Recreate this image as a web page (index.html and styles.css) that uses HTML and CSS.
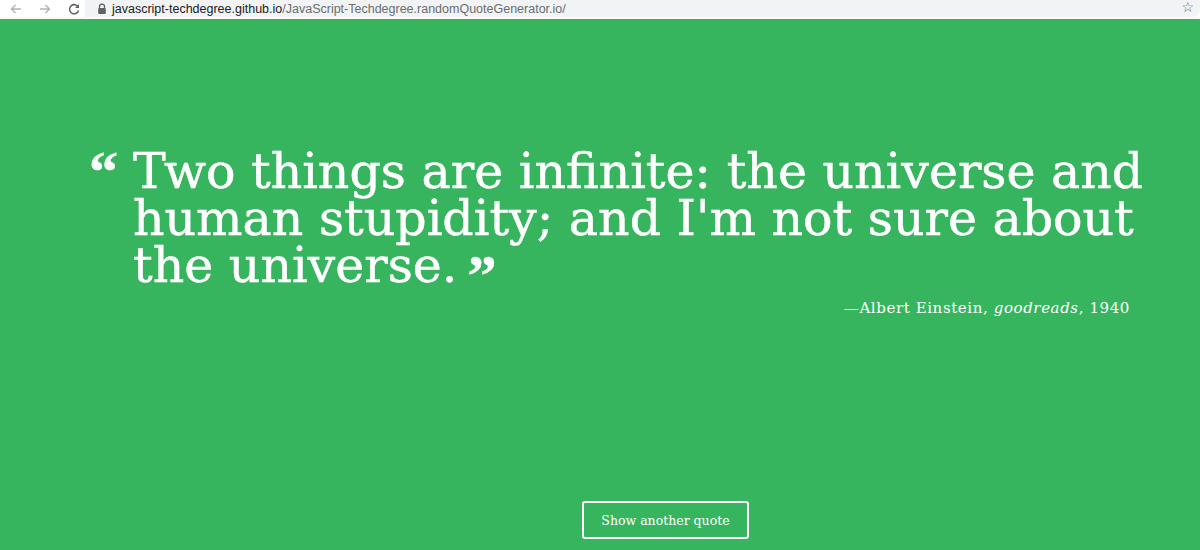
FILE: index.html
```html
<!DOCTYPE html>
<html>
<head>
<meta charset="utf-8">
<link rel="stylesheet" href="styles.css">
</head>
<body>
<div class="chrome">
  <div class="nav">
    <svg class="ico" width="14" height="14" viewBox="0 0 14 14"><path d="M12 7H2.5M6.5 3L2.5 7l4 4" fill="none" stroke="#b0b3b8" stroke-width="1.4"/></svg>
    <svg class="ico" width="14" height="14" viewBox="0 0 14 14"><path d="M2 7h9.5M7.5 3l4 4-4 4" fill="none" stroke="#b0b3b8" stroke-width="1.4"/></svg>
    <svg class="ico" width="14" height="14" viewBox="0 0 14 14"><path d="M11.3 5.2A4.6 4.6 0 1 0 11.6 8.5" fill="none" stroke="#5f6368" stroke-width="1.5"/><path d="M12 2v4H8z" fill="#5f6368"/></svg>
  </div>
  <div class="omnibox">
    <svg class="lock" width="10" height="12" viewBox="0 0 10 12"><path d="M2.5 5V3.6a2.5 2.5 0 0 1 5 0V5" fill="none" stroke="#5f6368" stroke-width="1.3"/><rect x="1.2" y="5" width="7.6" height="6" rx="1" fill="#5f6368"/></svg>
    <span class="host">javascript-techdegree.github.io</span><span class="path">/JavaScript-Techdegree.randomQuoteGenerator.io/</span>
    <span class="star">☆</span>
  </div>
</div>
<main class="page">
  <div class="quote-box">
    <p class="quote">Two things are infinite: the universe and human stupidity; and I'm not sure about the universe.</p>
    <p class="source">—Albert Einstein<span class="citation">goodreads</span><span class="year">1940</span></p>
  </div>
  <button class="load-quote">Show another quote</button>
</main>
</body>
</html>
```
FILE: styles.css
```css
html, body { margin: 0; padding: 0; }
body { background: #37b55e; font-family: "DejaVu Serif", serif; overflow: hidden; height: 550px; }
.chrome { height: 17px; background: #fff; display: flex; align-items: center; border-bottom: 2px solid #fafafa; }
.nav { display: flex; gap: 15px; padding-left: 9px; width: 76px; align-items: center; }
.ico { display: block; }
.omnibox { flex: 1; height: 17px; background: #f1f3f4; border-radius: 0 0 8px 0; display: flex; align-items: center; padding-left: 12px; font-family: "Liberation Sans", Arial, sans-serif; font-size: 12.5px; position: relative; }
.lock { margin-right: 5px; }
.host { color: #202124; }
.path { color: #6a6e72; }
.star { position: absolute; right: 6px; top: -1px; font-size: 14px; color: #5f6368; font-family: "DejaVu Sans", sans-serif; }
.page { height: 531px; display: flex; flex-direction: column; align-items: flex-start; padding-left: 133px; color: #fff; box-sizing: border-box; }
.quote-box { width: 1022px; padding-top: 129px; }
.quote { margin: 0; font-size: 49px; line-height: 47px; position: relative; -webkit-text-stroke: 0.5px #fff; }
.quote::before { content: "\201C"; position: absolute; left: -44px; top: 0; font-family: "Liberation Serif", serif; font-size: 58px; font-weight: bold; line-height: 47px; }
.quote::after { content: "\201D"; font-family: "Liberation Serif", serif; font-size: 58px; font-weight: bold; margin-left: 10px; line-height: 0; position: relative; top: 13px; }
.source { margin: 10px 0 0; padding-right: 25px; text-align: right; font-size: 15px; letter-spacing: 0.6px; }
.citation { font-style: italic; }
.citation::before { content: ", "; font-style: normal; }
.year::before { content: ", "; }
.load-quote { margin-top: auto; margin-bottom: 11px; margin-left: 449px; background: transparent; color: #fff; border: 2px solid #fff; border-radius: 3px; font-family: "DejaVu Serif", serif; font-size: 12.5px; width: 167px; height: 38px; cursor: pointer; }
```
